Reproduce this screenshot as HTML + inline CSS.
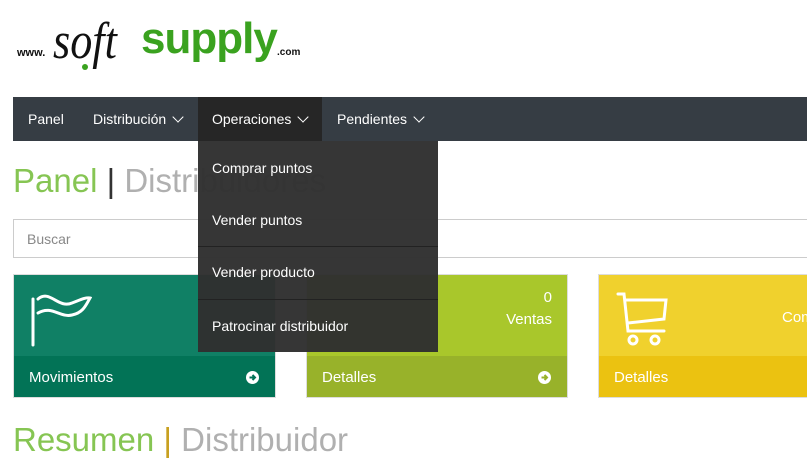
<!DOCTYPE html>
<html><head><meta charset="utf-8"><style>
body{margin:0;width:807px;height:469px;overflow:hidden;background:#fff;font-family:"Liberation Sans","DejaVu Sans",sans-serif;position:relative}
.a{position:absolute}
.nav{left:13px;top:97px;width:800px;height:44px;background:#363d44}
.ni{top:0;height:44px;line-height:45px;color:#fff;font-size:14px}
.chev{display:inline-block;width:7px;height:7px;border-right:1.3px solid #fff;border-bottom:1.3px solid #fff;transform:rotate(45deg);margin-left:8px;position:relative;top:-3px}
.h{font-size:33px;font-weight:300;color:#b0b0b0}
.g{color:#86c553}
.card{top:274px;height:124px;border:1px solid #ddd;box-sizing:border-box;overflow:hidden}
.foot{position:absolute;left:0;right:0;bottom:0;height:41px;line-height:44px;color:#fff;font-size:15px;padding-left:15px}
.arr{position:absolute;right:16px;top:15px;width:13px;height:13px}
.dd{left:198px;top:141px;width:240px;height:211px;background:rgba(48,48,48,.97)}
.di{left:14px;color:#fff;font-size:14px}
.sep{left:0;width:240px;height:1px;background:#222}
</style></head><body>
<div class="a" style="left:17px;top:47px;font-size:11px;font-weight:bold;color:#111">www.</div>
<div class="a" style="left:53px;top:12px;font-family:'Liberation Serif',serif;font-style:italic;font-size:52px;color:#111;transform:scaleX(0.85);transform-origin:left">soft</div>
<div class="a" style="left:141px;top:14px;font-size:44px;font-weight:bold;color:#3aa21f;letter-spacing:-1px">supply</div>
<div class="a" style="left:82px;top:64px;width:6px;height:6px;border-radius:50%;background:#3aa21f"></div>
<div class="a" style="left:277px;top:47px;font-size:10px;font-weight:bold;color:#111">.com</div>

<div class="a nav">
 <div class="a ni" style="left:15px">Panel</div>
 <div class="a ni" style="left:80px">Distribución<span class="chev"></span></div>
 <div class="a ni" style="left:185px;width:124px;background:#262626;padding-left:14px;box-sizing:border-box">Operaciones<span class="chev"></span></div>
 <div class="a ni" style="left:324px">Pendientes<span class="chev"></span></div>
</div>

<div class="a h" style="left:13px;top:162px"><span class="g">Panel</span> <span style="color:#333">|</span> Distribuidores</div>
<div class="a" style="left:13px;top:219px;width:800px;height:39px;border:1px solid #ccc;box-sizing:border-box;font-size:14px;color:#888;line-height:39px;padding-left:13px">Buscar</div>

<svg width="0" height="0" style="position:absolute"><defs><symbol id="ar" viewBox="0 0 13 13"><circle cx="6.5" cy="6.5" r="6.5" fill="#fff"/><path d="M3.5 6.5H9M6.5 4L9 6.5L6.5 9" stroke="currentColor" stroke-width="2" fill="none"/></symbol></defs></svg>
<div class="a card" style="left:13px;width:263px;background:#108065">
 <svg class="a" style="left:14px;top:16px" width="64" height="56" viewBox="0 0 64 56" fill="none" stroke="#fff" stroke-width="3" stroke-linecap="round"><path d="M5 8V54M10 8C22 -2 30 18 44 12C52 9 58 6 62 7C58 14 55 22 44 24C32 27 24 14 10 22"/></svg>
 <div class="foot" style="background:#027356">Movimientos<svg class="arr" style="color:#027356"><use href="#ar"/></svg></div>
</div>
<div class="a card" style="left:306px;width:262px;background:#a9c72b">
 <div class="a" style="right:15px;top:12px;color:#fff;font-size:15px;text-align:right;line-height:22px">0<br>Ventas</div>
 <div class="foot" style="background:#98b22a">Detalles<svg class="arr" style="color:#98b22a"><use href="#ar"/></svg></div>
</div>
<div class="a card" style="left:598px;width:220px;background:#f0d12d">
 <svg class="a" style="left:17px;top:16px" width="54" height="56" viewBox="0 0 54 56" fill="none" stroke="#fff" stroke-width="3" stroke-linecap="round"><path d="M2 3H8L12 40H48M9 9H50L48 28L12 32"/><circle cx="17" cy="49" r="4"/><circle cx="39" cy="49" r="4"/></svg>
 <div class="a" style="left:183px;top:34px;color:#fff;font-size:15px">Com</div>
 <div class="foot" style="background:#ebc211">Detalles</div>
</div>

<div class="a dd">
 <div class="a di" style="top:19px">Comprar puntos</div>
 <div class="a di" style="top:71px">Vender puntos</div>
 <div class="a sep" style="top:105px"></div>
 <div class="a di" style="top:123px">Vender producto</div>
 <div class="a sep" style="top:158px"></div>
 <div class="a di" style="top:177px">Patrocinar distribuidor</div>
</div>

<div class="a h" style="left:13px;top:421px"><span class="g">Resumen</span> <span style="color:#c8a020">|</span> Distribuidor</div>
</body></html>
